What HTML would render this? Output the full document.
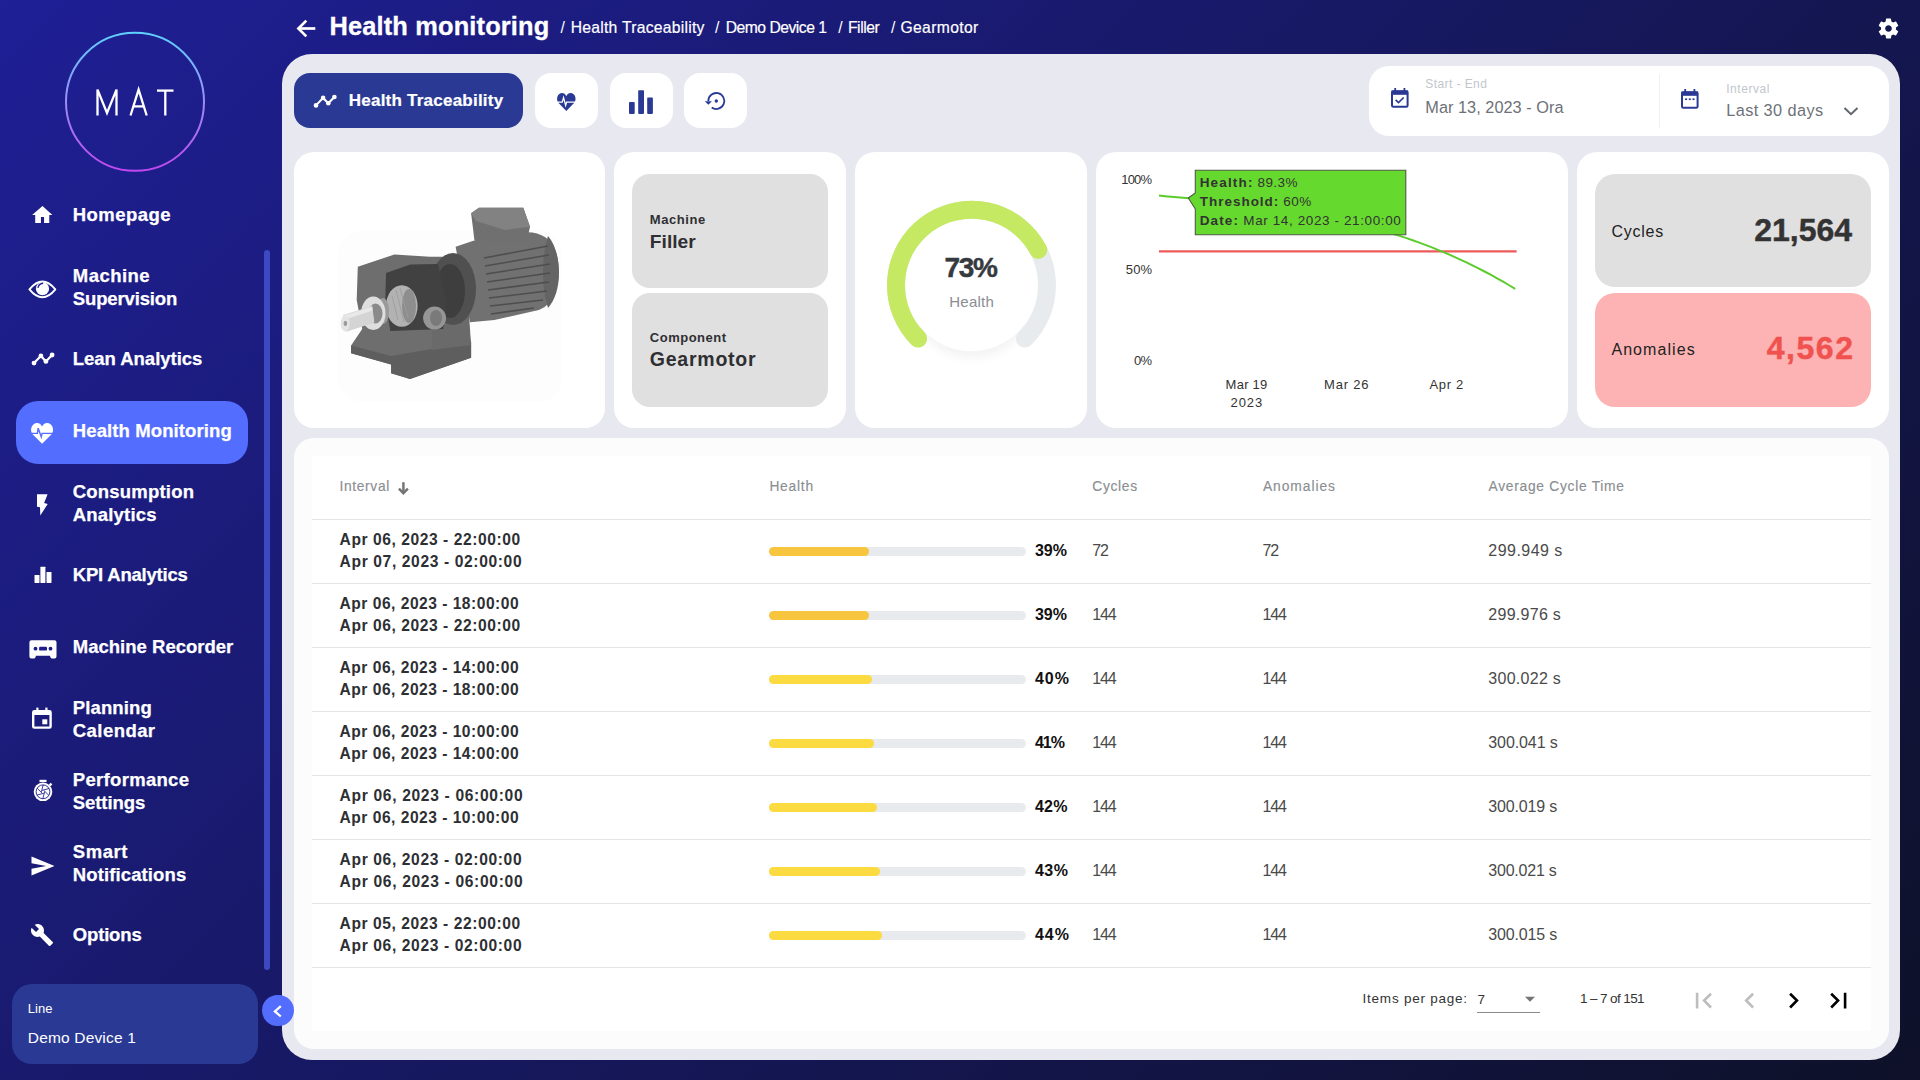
<!DOCTYPE html>
<html><head><meta charset="utf-8"><title>Health monitoring</title>
<style>
html,body{margin:0;padding:0;}
body{width:1920px;height:1080px;overflow:hidden;position:relative;font-family:"Liberation Sans", sans-serif;
background:linear-gradient(135deg,#1f1f96 0%,#0e1128 100%);}
div,svg{box-sizing:border-box;}
</style></head><body>
<div style="position:absolute;left:282px;top:54px;width:1618px;height:1006px;background:#e8e8f0;border-radius:30px;"></div>
<svg style="position:absolute;left:60px;top:26px;" width="150" height="150" viewBox="0 0 150 150">
<defs><linearGradient id="lg" x1="0" y1="0" x2="0" y2="1">
<stop offset="0" stop-color="#5fd0ff"/><stop offset="0.5" stop-color="#9a8cf5"/><stop offset="1" stop-color="#c247f0"/></linearGradient></defs>
<circle cx="75" cy="75.8" r="69" fill="none" stroke="url(#lg)" stroke-width="2"/>
<g fill="none" stroke="#fff" stroke-width="2.3" stroke-linejoin="miter">
<polyline points="37.5,89.5 37.5,63.6 47,87 56.5,63.6 56.5,89.5"/>
<polyline points="70.5,89.5 78.6,63.6 86.7,89.5"/>
<line x1="73.2" y1="80.4" x2="84" y2="80.4"/>
<line x1="97" y1="64.6" x2="113.5" y2="64.6"/>
<line x1="105.3" y1="64.6" x2="105.3" y2="89.5"/>
</g></svg>
<div style="position:absolute;left:16px;top:401px;width:232px;height:63px;background:#536dfe;border-radius:22px;"></div>
<svg style="position:absolute;left:30.2px;top:203.1px;" width="25" height="24" viewBox="0 0 24 24" preserveAspectRatio="none"><path fill="#fff" d="M10.5 20v-6h3v6h5v-8h3L12 3 2 12h3v8z"/></svg>
<div style="position:absolute;left:72.80px;top:206.44px;font-size:18.5px;line-height:18.5px;color:#ffffff;font-weight:700;white-space:pre;letter-spacing:0.457px;-webkit-text-stroke:0.25px #ffffff;">Homepage</div>
<svg style="position:absolute;left:28.1px;top:275.1px;" width="28.8" height="28.8" viewBox="0 0 24 24"><path d="M1.2 12 Q12 -1.2 22.8 12 Q12 25.2 1.2 12 Z" fill="none" stroke="#fff" stroke-width="1.6" stroke-linejoin="round"/><circle cx="12.08" cy="11.4" r="5.5" fill="#fff"/><path d="M8.4 10.3 Q9 7.6 12.2 6.9" fill="none" stroke="#1e1e8c" stroke-width="1.15" stroke-linecap="round"/></svg>
<div style="position:absolute;left:72.80px;top:267.24px;font-size:18.5px;line-height:18.5px;color:#ffffff;font-weight:700;white-space:pre;letter-spacing:0.450px;-webkit-text-stroke:0.25px #ffffff;">Machine</div>
<div style="position:absolute;left:72.80px;top:289.54px;font-size:18.5px;line-height:18.5px;color:#ffffff;font-weight:700;white-space:pre;letter-spacing:-0.140px;-webkit-text-stroke:0.25px #ffffff;">Supervision</div>
<svg style="position:absolute;left:29.5px;top:350.8px;" width="30" height="18" viewBox="0 0 30 18"><polyline points="4.00,12.10 10.90,4.90 15.90,10.40 22.10,4.00" fill="none" stroke="#fff" stroke-width="2.2" stroke-linejoin="round"/><circle cx="4.00" cy="12.10" r="2.4" fill="#fff"/><circle cx="10.90" cy="4.90" r="2.4" fill="#fff"/><circle cx="15.90" cy="10.40" r="2.4" fill="#fff"/><circle cx="22.10" cy="4.00" r="2.4" fill="#fff"/></svg>
<div style="position:absolute;left:72.80px;top:350.44px;font-size:18.5px;line-height:18.5px;color:#ffffff;font-weight:700;white-space:pre;letter-spacing:-0.031px;-webkit-text-stroke:0.25px #ffffff;">Lean Analytics</div>
<svg style="position:absolute;left:31.2px;top:423.1px;overflow:visible" width="24" height="22" viewBox="0 0 24 22"><path fill="#fff" d="M11.1 20.8 L1.6 11.2 C-0.6 8.8 -0.4 3.8 2.4 1.5 C5.2 -0.8 9.3 -0.3 11.1 3.6 C12.9 -0.3 17 -0.8 19.8 1.5 C22.6 3.8 22.8 8.8 20.6 11.2 Z"/><polyline points="-1,10.4 6.4,10.4 7.2,5.2 10.3,14 11.1,10.4 24,10.4" fill="none" stroke="#536dfe" stroke-width="1.4"/></svg>
<div style="position:absolute;left:72.80px;top:422.44px;font-size:18.5px;line-height:18.5px;color:#ffffff;font-weight:700;white-space:pre;letter-spacing:0.106px;-webkit-text-stroke:0.25px #ffffff;">Health Monitoring</div>
<svg style="position:absolute;left:35px;top:493.7px;" width="14" height="22" viewBox="0 0 14 22"><path fill="#fff" d="M2 0.3 L12.6 0.3 L9.1 8.9 L12.7 10.1 L5.3 21.4 L5 13.2 L2 12.7 Z"/></svg>
<div style="position:absolute;left:72.80px;top:483.24px;font-size:18.5px;line-height:18.5px;color:#ffffff;font-weight:700;white-space:pre;letter-spacing:0.200px;-webkit-text-stroke:0.25px #ffffff;">Consumption</div>
<div style="position:absolute;left:72.80px;top:505.54px;font-size:18.5px;line-height:18.5px;color:#ffffff;font-weight:700;white-space:pre;letter-spacing:0.175px;-webkit-text-stroke:0.25px #ffffff;">Analytics</div>
<svg style="position:absolute;left:33.5px;top:566.1px;" width="18" height="17" viewBox="0 0 18 17"><rect x="0.5" y="8.9" width="5" height="8.1" rx="0.4" fill="#fff"/><rect x="6.4" y="0.8" width="5" height="16.2" rx="0.4" fill="#fff"/><rect x="12.5" y="5.9" width="5" height="11.1" rx="0.4" fill="#fff"/></svg>
<div style="position:absolute;left:72.80px;top:566.44px;font-size:18.5px;line-height:18.5px;color:#ffffff;font-weight:700;white-space:pre;letter-spacing:-0.208px;-webkit-text-stroke:0.25px #ffffff;">KPI Analytics</div>
<svg style="position:absolute;left:28.5px;top:639.5px;" width="28" height="19" viewBox="0 0 28 19"><path fill="#fff" d="M2.4 0.2 H25.5 Q27.5 0.2 27.5 2.2 V16.6 Q27.5 18.6 25.5 18.6 H23.3 Q21.8 18.6 21.3 17 L21 15.8 H6.9 L6.6 17 Q6.1 18.6 4.6 18.6 H2.4 Q0.4 18.6 0.4 16.6 V2.2 Q0.4 0.2 2.4 0.2 Z"/><circle cx="6.5" cy="8.7" r="1.9" fill="#1e1e8c"/><circle cx="21.5" cy="8.7" r="1.9" fill="#1e1e8c"/><rect x="10.1" y="6.8" width="7.9" height="3.8" rx="1.2" fill="#1e1e8c"/></svg>
<div style="position:absolute;left:72.80px;top:638.44px;font-size:18.5px;line-height:18.5px;color:#ffffff;font-weight:700;white-space:pre;letter-spacing:0.007px;-webkit-text-stroke:0.25px #ffffff;">Machine Recorder</div>
<svg style="position:absolute;left:32.4px;top:707px;" width="20" height="22" viewBox="0 0 20 22"><rect x="1.2" y="4.2" width="17.4" height="16.4" rx="1.2" fill="none" stroke="#fff" stroke-width="2.4"/><rect x="1" y="4" width="18" height="4" fill="#fff"/><rect x="4.3" y="0.6" width="2.2" height="4" fill="#fff"/><rect x="13.3" y="0.6" width="2.2" height="4" fill="#fff"/><rect x="10.3" y="12.3" width="5" height="5" fill="#fff"/></svg>
<div style="position:absolute;left:72.80px;top:699.24px;font-size:18.5px;line-height:18.5px;color:#ffffff;font-weight:700;white-space:pre;letter-spacing:0.114px;-webkit-text-stroke:0.25px #ffffff;">Planning</div>
<div style="position:absolute;left:72.80px;top:721.54px;font-size:18.5px;line-height:18.5px;color:#ffffff;font-weight:700;white-space:pre;letter-spacing:0.443px;-webkit-text-stroke:0.25px #ffffff;">Calendar</div>
<svg style="position:absolute;left:31.5px;top:778px;" width="22" height="24" viewBox="0 0 22 24"><rect x="7.5" y="1.8" width="7" height="2.3" fill="#fff"/><rect x="17.4" y="5.2" width="2.4" height="2.6" fill="#fff" transform="rotate(45 18.6 6.5)"/><circle cx="11" cy="13.8" r="9.3" fill="#fff"/><circle cx="11" cy="13.8" r="6.9" fill="none" stroke="#1e1e8c" stroke-width="0.9"/><g stroke="#1e1e8c" stroke-width="0.85"><line x1="12.67" y1="13.73" x2="10.81" y2="20.70"/><line x1="11.90" y1="15.22" x2="4.93" y2="17.08"/><line x1="10.22" y1="15.28" x2="5.12" y2="10.19"/><line x1="9.33" y1="13.87" x2="11.19" y2="6.90"/><line x1="10.10" y1="12.38" x2="17.07" y2="10.52"/><line x1="11.78" y1="12.32" x2="16.88" y2="17.41"/></g></svg>
<div style="position:absolute;left:72.80px;top:771.24px;font-size:18.5px;line-height:18.5px;color:#ffffff;font-weight:700;white-space:pre;letter-spacing:0.310px;-webkit-text-stroke:0.25px #ffffff;">Performance</div>
<div style="position:absolute;left:72.80px;top:793.54px;font-size:18.5px;line-height:18.5px;color:#ffffff;font-weight:700;white-space:pre;letter-spacing:-0.071px;-webkit-text-stroke:0.25px #ffffff;">Settings</div>
<svg style="position:absolute;left:31.299999999999997px;top:855.5999999999999px;" width="24" height="20" viewBox="0 0 24 20"><path fill="#fff" d="M0.5 0.5 L23.5 10 L0.5 19.5 L0.5 12.7 L15.2 10 L0.5 7.3 Z"/></svg>
<div style="position:absolute;left:72.80px;top:843.24px;font-size:18.5px;line-height:18.5px;color:#ffffff;font-weight:700;white-space:pre;letter-spacing:0.525px;-webkit-text-stroke:0.25px #ffffff;">Smart</div>
<div style="position:absolute;left:72.80px;top:865.54px;font-size:18.5px;line-height:18.5px;color:#ffffff;font-weight:700;white-space:pre;letter-spacing:0.117px;-webkit-text-stroke:0.25px #ffffff;">Notifications</div>
<svg style="position:absolute;left:30.2px;top:923px;" width="24" height="24" viewBox="0 0 24 24"><path fill="#fff" d="M22.7 19l-9.1-9.1c.9-2.3.4-5-1.5-6.9-2-2-5-2.4-7.4-1.3L9 6 6 9 1.6 4.7C.4 7.1.9 10.1 2.9 12.1c1.9 1.9 4.6 2.4 6.9 1.5l9.1 9.1c.4.4 1 .4 1.4 0l2.3-2.3c.5-.4.5-1.1.1-1.4z"/></svg>
<div style="position:absolute;left:72.80px;top:926.44px;font-size:18.5px;line-height:18.5px;color:#ffffff;font-weight:700;white-space:pre;letter-spacing:-0.167px;-webkit-text-stroke:0.25px #ffffff;">Options</div>
<div style="position:absolute;left:264px;top:250px;width:6px;height:720px;background:#3d49c0;border-radius:3px;"></div>
<div style="position:absolute;left:12px;top:984px;width:246px;height:80px;background:#2a3a94;border-radius:20px;"></div>
<div style="position:absolute;left:27.80px;top:1002.00px;font-size:13px;line-height:13px;color:#ffffff;font-weight:400;white-space:pre;">Line</div>
<div style="position:absolute;left:27.80px;top:1030.48px;font-size:15.5px;line-height:15.5px;color:#ffffff;font-weight:400;white-space:pre;letter-spacing:0.167px;">Demo Device 1</div>
<div style="position:absolute;left:262.3px;top:994.8px;width:31.5px;height:31.5px;background:#536dfe;border-radius:16px;"></div>
<svg style="position:absolute;left:270px;top:1002.5px;" width="16" height="16" viewBox="0 0 16 16"><polyline points="10.8,3.2 4.9,8.4 10.8,13.5" fill="none" stroke="#fff" stroke-width="2.3"/></svg>
<svg style="position:absolute;left:290px;top:14px;" width="30" height="30" viewBox="0 0 30 30"><polyline points="16.3,6.6 8.4,14.5 16.3,22.4" fill="none" stroke="#fff" stroke-width="2.7"/><line x1="8.6" y1="14.5" x2="25.3" y2="14.5" stroke="#fff" stroke-width="2.7"/></svg>
<div style="position:absolute;left:329.50px;top:13.80px;font-size:25.4px;line-height:25.4px;color:#ffffff;font-weight:700;white-space:pre;letter-spacing:0.156px;-webkit-text-stroke:0.3px #ffffff;">Health monitoring</div>
<div style="position:absolute;left:560.60px;top:19.81px;font-size:15.7px;line-height:15.7px;color:#ffffff;font-weight:400;white-space:pre;">/</div>
<div style="position:absolute;left:570.70px;top:19.81px;font-size:15.7px;line-height:15.7px;color:#ffffff;font-weight:400;white-space:pre;letter-spacing:0.261px;-webkit-text-stroke:0.2px #ffffff;">Health Traceability</div>
<div style="position:absolute;left:715.00px;top:19.81px;font-size:15.7px;line-height:15.7px;color:#ffffff;font-weight:400;white-space:pre;">/</div>
<div style="position:absolute;left:725.70px;top:19.81px;font-size:15.7px;line-height:15.7px;color:#ffffff;font-weight:400;white-space:pre;letter-spacing:-0.492px;-webkit-text-stroke:0.2px #ffffff;">Demo Device 1</div>
<div style="position:absolute;left:838.30px;top:19.81px;font-size:15.7px;line-height:15.7px;color:#ffffff;font-weight:400;white-space:pre;">/</div>
<div style="position:absolute;left:848.00px;top:19.81px;font-size:15.7px;line-height:15.7px;color:#ffffff;font-weight:400;white-space:pre;letter-spacing:-0.460px;-webkit-text-stroke:0.2px #ffffff;">Filler</div>
<div style="position:absolute;left:891.00px;top:19.81px;font-size:15.7px;line-height:15.7px;color:#ffffff;font-weight:400;white-space:pre;">/</div>
<div style="position:absolute;left:900.40px;top:19.81px;font-size:15.7px;line-height:15.7px;color:#ffffff;font-weight:400;white-space:pre;letter-spacing:0.363px;-webkit-text-stroke:0.2px #ffffff;">Gearmotor</div>
<svg style="position:absolute;left:1876px;top:16px;" width="25" height="25" viewBox="0 0 24 24"><path fill="#fff" fill-rule="evenodd" d="M19.14 12.94c.04-.3.06-.61.06-.94 0-.32-.02-.64-.07-.94l2.03-1.58c.18-.14.23-.41.12-.61l-1.92-3.32c-.12-.22-.37-.29-.59-.22l-2.39.96c-.5-.38-1.03-.7-1.62-.94l-.36-2.54c-.04-.24-.24-.41-.48-.41h-3.84c-.24 0-.43.17-.47.41l-.36 2.54c-.59.24-1.13.57-1.62.94l-2.39-.96c-.22-.08-.47 0-.59.22L2.74 8.87c-.12.21-.08.47.12.61l2.03 1.58c-.05.3-.09.63-.09.94s.02.64.07.94l-2.03 1.58c-.18.14-.23.41-.12.61l1.92 3.32c.12.22.37.29.59.22l2.39-.96c.5.38 1.03.7 1.62.94l.36 2.54c.05.24.24.41.48.41h3.84c.24 0 .44-.17.47-.41l.36-2.54c.59-.24 1.13-.56 1.62-.94l2.39.96c.22.08.47 0 .59-.22l1.92-3.32c.12-.22.07-.47-.12-.61l-2.01-1.58zM12 15.2c-1.77 0-3.2-1.43-3.2-3.2s1.43-3.2 3.2-3.2 3.2 1.43 3.2 3.2-1.43 3.2-3.2 3.2z"/></svg>
<div style="position:absolute;left:294px;top:73px;width:229px;height:55px;background:#2a3a94;border-radius:16px;"></div>
<svg style="position:absolute;left:312.3px;top:92.8px;" width="30" height="18" viewBox="0 0 30 18"><polyline points="4.00,12.40 11.10,4.90 16.30,10.30 22.40,4.00" fill="none" stroke="#fff" stroke-width="2.1" stroke-linejoin="round"/><circle cx="4.00" cy="12.40" r="2.3" fill="#fff"/><circle cx="11.10" cy="4.90" r="2.3" fill="#fff"/><circle cx="16.30" cy="10.30" r="2.3" fill="#fff"/><circle cx="22.40" cy="4.00" r="2.3" fill="#fff"/></svg>
<div style="position:absolute;left:348.80px;top:91.81px;font-size:17px;line-height:17px;color:#ffffff;font-weight:700;white-space:pre;letter-spacing:0.228px;-webkit-text-stroke:0.2px #ffffff;">Health Traceability</div>
<div style="position:absolute;left:535px;top:73px;width:63px;height:55px;background:#ffffff;border-radius:16px;"></div>
<div style="position:absolute;left:610px;top:73px;width:63px;height:55px;background:#ffffff;border-radius:16px;"></div>
<div style="position:absolute;left:684px;top:73px;width:63px;height:55px;background:#ffffff;border-radius:16px;"></div>
<svg style="position:absolute;left:557.1px;top:92.8px;overflow:visible" width="19" height="18.2" viewBox="0 0 19 18.2"><g transform="scale(0.84,0.87)"><path fill="#2a3a94" d="M11.1 20.8 L1.6 11.2 C-0.6 8.8 -0.4 3.8 2.4 1.5 C5.2 -0.8 9.3 -0.3 11.1 3.6 C12.9 -0.3 17 -0.8 19.8 1.5 C22.6 3.8 22.8 8.8 20.6 11.2 Z"/><polyline points="-1,10.6 6.2,10.6 7.8,5.2 10.3,14.3 11.4,10.6 24,10.6" fill="none" stroke="#fff" stroke-width="1.5"/></g></svg>
<svg style="position:absolute;left:626px;top:88px;" width="30" height="28" viewBox="0 0 30 28"><rect x="3" y="14.1" width="5.7" height="11.8" rx="0.8" fill="#2a3a94"/><rect x="12.2" y="2.2" width="5.8" height="23.7" rx="0.8" fill="#2a3a94"/><rect x="21.2" y="9.6" width="5.7" height="16.3" rx="0.8" fill="#2a3a94"/></svg>
<svg style="position:absolute;left:698px;top:86px;" width="36" height="30" viewBox="0 0 36 30"><path d="M10.3 15 A8 8 0 1 1 13.7 21.55" fill="none" stroke="#2a3a94" stroke-width="1.8"/><path d="M6.8 15.2 L13.9 15.2 L10.4 18.8 Z" fill="#2a3a94"/><circle cx="18.3" cy="15" r="1.7" fill="#2a3a94"/></svg>
<div style="position:absolute;left:1369px;top:66px;width:520px;height:70px;background:#ffffff;border-radius:20px;"></div>
<div style="position:absolute;left:1658.5px;top:74px;width:1.2px;height:54px;background:#eef0f3;border-radius:0px;"></div>
<svg style="position:absolute;left:1389px;top:85px;" width="22" height="24" viewBox="0 0 22 24"><rect x="3" y="6.2" width="15.6" height="15.6" rx="1.3" fill="none" stroke="#2a3a94" stroke-width="2"/><rect x="2.5" y="5.5" width="16.6" height="4.3" fill="#2a3a94"/><rect x="5.3" y="3" width="1.8" height="3" fill="#2a3a94"/><rect x="14.5" y="3" width="1.8" height="3" fill="#2a3a94"/><polyline points="6.6,14.9 9.5,17.6 14.7,12.5" fill="none" stroke="#2a3a94" stroke-width="1.7"/></svg>
<svg style="position:absolute;left:1678.5px;top:86px;" width="22" height="24" viewBox="0 0 22 24"><rect x="3" y="6.2" width="15.6" height="15.6" rx="1.3" fill="none" stroke="#2a3a94" stroke-width="2"/><rect x="2.5" y="5.5" width="16.6" height="4.3" fill="#2a3a94"/><rect x="5.3" y="3" width="1.8" height="3" fill="#2a3a94"/><rect x="14.5" y="3" width="1.8" height="3" fill="#2a3a94"/><rect x="6.1" y="12.4" width="2" height="1.7" fill="#2a3a94"/><rect x="9.8" y="12.4" width="2" height="1.7" fill="#2a3a94"/><rect x="13.5" y="12.4" width="2" height="1.7" fill="#2a3a94"/></svg>
<div style="position:absolute;left:1425.30px;top:77.64px;font-size:12px;line-height:12px;color:#c2c6cc;font-weight:400;white-space:pre;letter-spacing:0.420px;">Start - End</div>
<div style="position:absolute;left:1425.30px;top:99.30px;font-size:16.3px;line-height:16.3px;color:#6d7178;font-weight:400;white-space:pre;letter-spacing:0.035px;">Mar 13, 2023 - Ora</div>
<div style="position:absolute;left:1726.20px;top:82.84px;font-size:12px;line-height:12px;color:#c2c6cc;font-weight:400;white-space:pre;letter-spacing:0.543px;">Interval</div>
<div style="position:absolute;left:1726.20px;top:102.40px;font-size:16.3px;line-height:16.3px;color:#6d7178;font-weight:400;white-space:pre;letter-spacing:0.418px;">Last 30 days</div>
<svg style="position:absolute;left:1840px;top:102px;" width="22" height="18" viewBox="0 0 22 18"><polyline points="4.5,6 11,12.2 17.5,6" fill="none" stroke="#62666d" stroke-width="2"/></svg>
<div style="position:absolute;left:294px;top:152px;width:311px;height:276px;background:#ffffff;border-radius:20px;"></div>
<div style="position:absolute;left:614px;top:152px;width:232px;height:276px;background:#ffffff;border-radius:20px;"></div>
<div style="position:absolute;left:855px;top:152px;width:232px;height:276px;background:#ffffff;border-radius:20px;"></div>
<div style="position:absolute;left:1096px;top:152px;width:472px;height:276px;background:#ffffff;border-radius:20px;"></div>
<div style="position:absolute;left:1577px;top:152px;width:312px;height:276px;background:#ffffff;border-radius:20px;"></div>
<div style="position:absolute;left:632px;top:174px;width:196px;height:114px;background:#e0e0e0;border-radius:18px;"></div>
<div style="position:absolute;left:632px;top:293px;width:196px;height:114px;background:#e0e0e0;border-radius:18px;"></div>
<div style="position:absolute;left:649.80px;top:212.90px;font-size:13px;line-height:13px;color:#2f2f33;font-weight:700;white-space:pre;letter-spacing:0.583px;">Machine</div>
<div style="position:absolute;left:649.80px;top:231.75px;font-size:19.2px;line-height:19.2px;color:#2f2f33;font-weight:700;white-space:pre;letter-spacing:0.020px;">Filler</div>
<div style="position:absolute;left:649.80px;top:330.90px;font-size:13px;line-height:13px;color:#2f2f33;font-weight:700;white-space:pre;letter-spacing:0.500px;">Component</div>
<div style="position:absolute;left:649.80px;top:350.19px;font-size:19.5px;line-height:19.5px;color:#2f2f33;font-weight:700;white-space:pre;letter-spacing:0.762px;">Gearmotor</div>
<svg style="position:absolute;left:855px;top:152px;" width="232" height="276" viewBox="0 0 232 276"><defs><filter id="gsh" x="-30%" y="-30%" width="160%" height="160%"><feGaussianBlur stdDeviation="6"/></filter></defs><circle cx="116.5" cy="143.2" r="62" fill="#000" opacity="0.05" filter="url(#gsh)"/><circle cx="116.5" cy="133.2" r="66" fill="#fff"/><path d="M63.11 186.59 A75.5 75.5 0 1 1 169.89 186.59" fill="none" stroke="#e8ebed" stroke-width="18" stroke-linecap="round"/><path d="M63.11 186.59 A75.5 75.5 0 1 1 183.22 97.87" fill="none" stroke="#c5e963" stroke-width="18" stroke-linecap="round"/></svg>
<div style="position:absolute;left:944.60px;top:253.90px;font-size:28px;line-height:28px;color:#363a3f;font-weight:700;white-space:pre;letter-spacing:-1.400px;-webkit-text-stroke:0.45px #363a3f;">73%</div>
<div style="position:absolute;left:949.30px;top:293.80px;font-size:15px;line-height:15px;color:#8a8e93;font-weight:400;white-space:pre;letter-spacing:0.240px;">Health</div>
<div style="position:absolute;left:1121.30px;top:173.20px;font-size:13px;line-height:13px;color:#333333;font-weight:400;white-space:pre;letter-spacing:-0.833px;">100%</div>
<div style="position:absolute;left:1125.80px;top:263.00px;font-size:13px;line-height:13px;color:#333333;font-weight:400;white-space:pre;letter-spacing:0.100px;">50%</div>
<div style="position:absolute;left:1133.90px;top:353.70px;font-size:13px;line-height:13px;color:#333333;font-weight:400;white-space:pre;letter-spacing:-0.700px;">0%</div>
<div style="position:absolute;left:1225.60px;top:377.80px;font-size:13px;line-height:13px;color:#333333;font-weight:400;white-space:pre;letter-spacing:0.240px;">Mar 19</div>
<div style="position:absolute;left:1230.60px;top:395.90px;font-size:13px;line-height:13px;color:#333333;font-weight:400;white-space:pre;letter-spacing:0.900px;">2023</div>
<div style="position:absolute;left:1324.10px;top:377.80px;font-size:13px;line-height:13px;color:#333333;font-weight:400;white-space:pre;letter-spacing:0.800px;">Mar 26</div>
<div style="position:absolute;left:1429.50px;top:377.80px;font-size:13px;line-height:13px;color:#333333;font-weight:400;white-space:pre;letter-spacing:0.650px;">Apr 2</div>
<svg style="position:absolute;left:1096px;top:152px;" width="472" height="276" viewBox="0 0 472 276"><line x1="63" y1="99.3" x2="420.6" y2="99.3" stroke="#ee5a5a" stroke-width="2.2"/><polyline points="63.00,43.59 69.04,44.13 75.07,44.68 81.11,45.24 87.15,45.79 93.19,46.35 99.22,46.92 105.26,47.50 111.30,48.09 117.34,48.69 123.37,49.31 129.41,49.95 135.45,50.60 141.48,51.28 147.52,51.97 153.56,52.69 159.60,53.44 165.63,54.22 171.67,55.02 177.71,55.86 183.75,56.73 189.78,57.64 195.82,58.58 201.86,59.57 207.89,60.59 213.93,61.66 219.97,62.77 226.01,63.93 232.04,65.14 238.08,66.40 244.12,67.71 250.16,69.08 256.19,70.50 262.23,71.98 268.27,73.52 274.31,75.12 280.34,76.78 286.38,78.51 292.42,80.31 298.45,82.18 304.49,84.11 310.53,86.13 316.57,88.21 322.60,90.37 328.64,92.61 334.68,94.93 340.72,97.34 346.75,99.82 352.79,102.40 358.83,105.06 364.86,107.81 370.90,110.65 376.94,113.58 382.98,116.61 389.01,119.74 395.05,122.97 401.09,126.30 407.13,129.73 413.16,133.26 419.20,136.90" fill="none" stroke="#5ccb2c" stroke-width="2" stroke-linejoin="round"/></svg>
<svg style="position:absolute;left:1185px;top:168px;" width="224" height="70" viewBox="0 0 224 70"><path d="M10.3 2.3 H220.8 V66.7 H10.3 V41 L3.3 30 L10.3 25 Z" fill="#66d92e" stroke="#4d5b45" stroke-width="1.1"/></svg>
<div style="position:absolute;left:1199.70px;top:176.07px;font-size:13.5px;line-height:13.5px;color:#333;font-weight:700;white-space:pre;letter-spacing:1.167px;">Health:</div>
<div style="position:absolute;left:1257.50px;top:176.07px;font-size:13.5px;line-height:13.5px;color:#333;font-weight:400;white-space:pre;letter-spacing:0.425px;">89.3%</div>
<div style="position:absolute;left:1199.70px;top:194.87px;font-size:13.5px;line-height:13.5px;color:#333;font-weight:700;white-space:pre;letter-spacing:0.989px;">Threshold:</div>
<div style="position:absolute;left:1283.30px;top:194.87px;font-size:13.5px;line-height:13.5px;color:#333;font-weight:400;white-space:pre;letter-spacing:0.500px;">60%</div>
<div style="position:absolute;left:1199.70px;top:214.07px;font-size:13.5px;line-height:13.5px;color:#333;font-weight:700;white-space:pre;letter-spacing:1.125px;">Date:</div>
<div style="position:absolute;left:1243.30px;top:214.07px;font-size:13.5px;line-height:13.5px;color:#333;font-weight:400;white-space:pre;letter-spacing:0.609px;">Mar 14, 2023 - 21:00:00</div>
<div style="position:absolute;left:1595px;top:174px;width:276px;height:113px;background:#e0e0e0;border-radius:20px;"></div>
<div style="position:absolute;left:1595px;top:293px;width:276px;height:114px;background:#fdb3b3;border-radius:20px;"></div>
<div style="position:absolute;left:1611.40px;top:223.66px;font-size:16px;line-height:16px;color:#222;font-weight:400;white-space:pre;letter-spacing:0.780px;">Cycles</div>
<div style="position:absolute;left:1754.20px;top:214.31px;font-size:32px;line-height:32px;color:#333333;font-weight:700;white-space:pre;letter-spacing:0.020px;-webkit-text-stroke:0.45px #333333;">21,564</div>
<div style="position:absolute;left:1611.40px;top:341.76px;font-size:16px;line-height:16px;color:#222;font-weight:400;white-space:pre;letter-spacing:1.075px;">Anomalies</div>
<div style="position:absolute;left:1766.70px;top:332.31px;font-size:32px;line-height:32px;color:#f0524f;font-weight:700;white-space:pre;letter-spacing:1.550px;-webkit-text-stroke:0.45px #f0524f;">4,562</div>
<div style="position:absolute;left:294px;top:438px;width:1595px;height:611px;background:#fcfcfd;border-radius:20px;"></div>
<div style="position:absolute;left:312px;top:456px;width:1559px;height:575px;background:#ffffff;border-radius:0px;"></div>
<div style="position:absolute;left:339.40px;top:479.92px;font-size:13.8px;line-height:13.8px;color:#8b8e92;font-weight:400;white-space:pre;letter-spacing:0.671px;-webkit-text-stroke:0.15px #8b8e92;">Interval</div>
<svg style="position:absolute;left:394px;top:478px;" width="18" height="20" viewBox="0 0 18 20"><line x1="9.4" y1="4.2" x2="9.4" y2="14.5" stroke="#757575" stroke-width="2.5"/><polyline points="4.9,10.6 9.4,15.2 13.9,10.6" fill="none" stroke="#757575" stroke-width="2.5"/></svg>
<div style="position:absolute;left:769.40px;top:479.92px;font-size:13.8px;line-height:13.8px;color:#8b8e92;font-weight:400;white-space:pre;letter-spacing:0.760px;-webkit-text-stroke:0.15px #8b8e92;">Health</div>
<div style="position:absolute;left:1092.30px;top:479.92px;font-size:13.8px;line-height:13.8px;color:#8b8e92;font-weight:400;white-space:pre;letter-spacing:0.680px;-webkit-text-stroke:0.15px #8b8e92;">Cycles</div>
<div style="position:absolute;left:1262.90px;top:479.92px;font-size:13.8px;line-height:13.8px;color:#8b8e92;font-weight:400;white-space:pre;letter-spacing:0.962px;-webkit-text-stroke:0.15px #8b8e92;">Anomalies</div>
<div style="position:absolute;left:1488.50px;top:479.92px;font-size:13.8px;line-height:13.8px;color:#8b8e92;font-weight:400;white-space:pre;letter-spacing:0.724px;-webkit-text-stroke:0.15px #8b8e92;">Average Cycle Time</div>
<div style="position:absolute;left:312px;top:519px;width:1559px;height:1px;background:#e6e6e6;border-radius:0px;"></div>
<div style="position:absolute;left:339.60px;top:531.59px;font-size:15.6px;line-height:15.6px;color:#2d2f33;font-weight:700;white-space:pre;letter-spacing:0.559px;">Apr 06, 2023 - 22:00:00</div>
<div style="position:absolute;left:339.60px;top:553.69px;font-size:15.6px;line-height:15.6px;color:#2d2f33;font-weight:700;white-space:pre;letter-spacing:0.627px;">Apr 07, 2023 - 02:00:00</div>
<div style="position:absolute;left:769px;top:547px;width:257px;height:9px;background:#e9eaee;border-radius:4.5px;"></div>
<div style="position:absolute;left:769px;top:547px;width:100.2px;height:9px;background:#f8c53e;border-radius:4.5px;"></div>
<div style="position:absolute;left:1034.90px;top:542.86px;font-size:16px;line-height:16px;color:#111111;font-weight:700;white-space:pre;">39%</div>
<div style="position:absolute;left:1092.20px;top:542.86px;font-size:16px;line-height:16px;color:#4a4a4a;font-weight:400;white-space:pre;letter-spacing:-1.100px;">72</div>
<div style="position:absolute;left:1262.50px;top:542.86px;font-size:16px;line-height:16px;color:#4a4a4a;font-weight:400;white-space:pre;letter-spacing:-1.100px;">72</div>
<div style="position:absolute;left:1488.30px;top:542.86px;font-size:16px;line-height:16px;color:#4a4a4a;font-weight:400;white-space:pre;letter-spacing:0.463px;">299.949 s</div>
<div style="position:absolute;left:312px;top:583px;width:1559px;height:1px;background:#e6e6e6;border-radius:0px;"></div>
<div style="position:absolute;left:339.60px;top:595.59px;font-size:15.6px;line-height:15.6px;color:#2d2f33;font-weight:700;white-space:pre;letter-spacing:0.491px;">Apr 06, 2023 - 18:00:00</div>
<div style="position:absolute;left:339.60px;top:617.69px;font-size:15.6px;line-height:15.6px;color:#2d2f33;font-weight:700;white-space:pre;letter-spacing:0.559px;">Apr 06, 2023 - 22:00:00</div>
<div style="position:absolute;left:769px;top:611px;width:257px;height:9px;background:#e9eaee;border-radius:4.5px;"></div>
<div style="position:absolute;left:769px;top:611px;width:100.2px;height:9px;background:#f8c53e;border-radius:4.5px;"></div>
<div style="position:absolute;left:1034.90px;top:606.86px;font-size:16px;line-height:16px;color:#111111;font-weight:700;white-space:pre;">39%</div>
<div style="position:absolute;left:1092.20px;top:606.86px;font-size:16px;line-height:16px;color:#4a4a4a;font-weight:400;white-space:pre;letter-spacing:-1.100px;">144</div>
<div style="position:absolute;left:1262.50px;top:606.86px;font-size:16px;line-height:16px;color:#4a4a4a;font-weight:400;white-space:pre;letter-spacing:-1.100px;">144</div>
<div style="position:absolute;left:1488.30px;top:606.86px;font-size:16px;line-height:16px;color:#4a4a4a;font-weight:400;white-space:pre;letter-spacing:0.275px;">299.976 s</div>
<div style="position:absolute;left:312px;top:647px;width:1559px;height:1px;background:#e6e6e6;border-radius:0px;"></div>
<div style="position:absolute;left:339.60px;top:659.59px;font-size:15.6px;line-height:15.6px;color:#2d2f33;font-weight:700;white-space:pre;letter-spacing:0.491px;">Apr 06, 2023 - 14:00:00</div>
<div style="position:absolute;left:339.60px;top:681.69px;font-size:15.6px;line-height:15.6px;color:#2d2f33;font-weight:700;white-space:pre;letter-spacing:0.491px;">Apr 06, 2023 - 18:00:00</div>
<div style="position:absolute;left:769px;top:675px;width:257px;height:9px;background:#e9eaee;border-radius:4.5px;"></div>
<div style="position:absolute;left:769px;top:675px;width:102.8px;height:9px;background:#fbdb3f;border-radius:4.5px;"></div>
<div style="position:absolute;left:1034.90px;top:670.86px;font-size:16px;line-height:16px;color:#111111;font-weight:700;white-space:pre;letter-spacing:1.000px;">40%</div>
<div style="position:absolute;left:1092.20px;top:670.86px;font-size:16px;line-height:16px;color:#4a4a4a;font-weight:400;white-space:pre;letter-spacing:-1.100px;">144</div>
<div style="position:absolute;left:1262.50px;top:670.86px;font-size:16px;line-height:16px;color:#4a4a4a;font-weight:400;white-space:pre;letter-spacing:-1.100px;">144</div>
<div style="position:absolute;left:1488.30px;top:670.86px;font-size:16px;line-height:16px;color:#4a4a4a;font-weight:400;white-space:pre;letter-spacing:0.275px;">300.022 s</div>
<div style="position:absolute;left:312px;top:711px;width:1559px;height:1px;background:#e6e6e6;border-radius:0px;"></div>
<div style="position:absolute;left:339.60px;top:723.59px;font-size:15.6px;line-height:15.6px;color:#2d2f33;font-weight:700;white-space:pre;letter-spacing:0.491px;">Apr 06, 2023 - 10:00:00</div>
<div style="position:absolute;left:339.60px;top:745.69px;font-size:15.6px;line-height:15.6px;color:#2d2f33;font-weight:700;white-space:pre;letter-spacing:0.491px;">Apr 06, 2023 - 14:00:00</div>
<div style="position:absolute;left:769px;top:739px;width:257px;height:9px;background:#e9eaee;border-radius:4.5px;"></div>
<div style="position:absolute;left:769px;top:739px;width:105.4px;height:9px;background:#fbdb3f;border-radius:4.5px;"></div>
<div style="position:absolute;left:1034.90px;top:734.86px;font-size:16px;line-height:16px;color:#111111;font-weight:700;white-space:pre;letter-spacing:-1.000px;">41%</div>
<div style="position:absolute;left:1092.20px;top:734.86px;font-size:16px;line-height:16px;color:#4a4a4a;font-weight:400;white-space:pre;letter-spacing:-1.100px;">144</div>
<div style="position:absolute;left:1262.50px;top:734.86px;font-size:16px;line-height:16px;color:#4a4a4a;font-weight:400;white-space:pre;letter-spacing:-1.100px;">144</div>
<div style="position:absolute;left:1488.30px;top:734.86px;font-size:16px;line-height:16px;color:#4a4a4a;font-weight:400;white-space:pre;letter-spacing:-0.100px;">300.041 s</div>
<div style="position:absolute;left:312px;top:775px;width:1559px;height:1px;background:#e6e6e6;border-radius:0px;"></div>
<div style="position:absolute;left:339.60px;top:787.59px;font-size:15.6px;line-height:15.6px;color:#2d2f33;font-weight:700;white-space:pre;letter-spacing:0.673px;">Apr 06, 2023 - 06:00:00</div>
<div style="position:absolute;left:339.60px;top:809.69px;font-size:15.6px;line-height:15.6px;color:#2d2f33;font-weight:700;white-space:pre;letter-spacing:0.491px;">Apr 06, 2023 - 10:00:00</div>
<div style="position:absolute;left:769px;top:803px;width:257px;height:9px;background:#e9eaee;border-radius:4.5px;"></div>
<div style="position:absolute;left:769px;top:803px;width:107.9px;height:9px;background:#fbdb3f;border-radius:4.5px;"></div>
<div style="position:absolute;left:1034.90px;top:798.86px;font-size:16px;line-height:16px;color:#111111;font-weight:700;white-space:pre;letter-spacing:0.250px;">42%</div>
<div style="position:absolute;left:1092.20px;top:798.86px;font-size:16px;line-height:16px;color:#4a4a4a;font-weight:400;white-space:pre;letter-spacing:-1.100px;">144</div>
<div style="position:absolute;left:1262.50px;top:798.86px;font-size:16px;line-height:16px;color:#4a4a4a;font-weight:400;white-space:pre;letter-spacing:-1.100px;">144</div>
<div style="position:absolute;left:1488.30px;top:798.86px;font-size:16px;line-height:16px;color:#4a4a4a;font-weight:400;white-space:pre;letter-spacing:-0.162px;">300.019 s</div>
<div style="position:absolute;left:312px;top:839px;width:1559px;height:1px;background:#e6e6e6;border-radius:0px;"></div>
<div style="position:absolute;left:339.60px;top:851.59px;font-size:15.6px;line-height:15.6px;color:#2d2f33;font-weight:700;white-space:pre;letter-spacing:0.627px;">Apr 06, 2023 - 02:00:00</div>
<div style="position:absolute;left:339.60px;top:873.69px;font-size:15.6px;line-height:15.6px;color:#2d2f33;font-weight:700;white-space:pre;letter-spacing:0.673px;">Apr 06, 2023 - 06:00:00</div>
<div style="position:absolute;left:769px;top:867px;width:257px;height:9px;background:#e9eaee;border-radius:4.5px;"></div>
<div style="position:absolute;left:769px;top:867px;width:110.5px;height:9px;background:#fbdb3f;border-radius:4.5px;"></div>
<div style="position:absolute;left:1034.90px;top:862.86px;font-size:16px;line-height:16px;color:#111111;font-weight:700;white-space:pre;letter-spacing:0.500px;">43%</div>
<div style="position:absolute;left:1092.20px;top:862.86px;font-size:16px;line-height:16px;color:#4a4a4a;font-weight:400;white-space:pre;letter-spacing:-1.100px;">144</div>
<div style="position:absolute;left:1262.50px;top:862.86px;font-size:16px;line-height:16px;color:#4a4a4a;font-weight:400;white-space:pre;letter-spacing:-1.100px;">144</div>
<div style="position:absolute;left:1488.30px;top:862.86px;font-size:16px;line-height:16px;color:#4a4a4a;font-weight:400;white-space:pre;letter-spacing:-0.225px;">300.021 s</div>
<div style="position:absolute;left:312px;top:903px;width:1559px;height:1px;background:#e6e6e6;border-radius:0px;"></div>
<div style="position:absolute;left:339.60px;top:915.59px;font-size:15.6px;line-height:15.6px;color:#2d2f33;font-weight:700;white-space:pre;letter-spacing:0.559px;">Apr 05, 2023 - 22:00:00</div>
<div style="position:absolute;left:339.60px;top:937.69px;font-size:15.6px;line-height:15.6px;color:#2d2f33;font-weight:700;white-space:pre;letter-spacing:0.627px;">Apr 06, 2023 - 02:00:00</div>
<div style="position:absolute;left:769px;top:931px;width:257px;height:9px;background:#e9eaee;border-radius:4.5px;"></div>
<div style="position:absolute;left:769px;top:931px;width:113.1px;height:9px;background:#fbdb3f;border-radius:4.5px;"></div>
<div style="position:absolute;left:1034.90px;top:926.86px;font-size:16px;line-height:16px;color:#111111;font-weight:700;white-space:pre;letter-spacing:1.000px;">44%</div>
<div style="position:absolute;left:1092.20px;top:926.86px;font-size:16px;line-height:16px;color:#4a4a4a;font-weight:400;white-space:pre;letter-spacing:-1.100px;">144</div>
<div style="position:absolute;left:1262.50px;top:926.86px;font-size:16px;line-height:16px;color:#4a4a4a;font-weight:400;white-space:pre;letter-spacing:-1.100px;">144</div>
<div style="position:absolute;left:1488.30px;top:926.86px;font-size:16px;line-height:16px;color:#4a4a4a;font-weight:400;white-space:pre;letter-spacing:-0.162px;">300.015 s</div>
<div style="position:absolute;left:312px;top:967px;width:1559px;height:1px;background:#e6e6e6;border-radius:0px;"></div>
<div style="position:absolute;left:1362.60px;top:991.87px;font-size:13.5px;line-height:13.5px;color:#333333;font-weight:400;white-space:pre;letter-spacing:0.757px;">Items per page:</div>
<div style="position:absolute;left:1477.50px;top:992.57px;font-size:13.5px;line-height:13.5px;color:#333333;font-weight:400;white-space:pre;">7</div>
<svg style="position:absolute;left:1522px;top:994px;" width="16" height="10" viewBox="0 0 16 10"><path d="M3 2.8 H13 L8 7.8 Z" fill="#757575"/></svg>
<div style="position:absolute;left:1477px;top:1012px;width:62.5px;height:1px;background:#8a8a8a;border-radius:0px;"></div>
<div style="position:absolute;left:1580.00px;top:991.87px;font-size:13.5px;line-height:13.5px;color:#333333;font-weight:400;white-space:pre;letter-spacing:-0.609px;">1 – 7 of 151</div>
<svg style="position:absolute;left:1688.2px;top:984.9px;" width="31.2" height="31.2" viewBox="0 0 24 24"><path fill="#bdbdbd" d="M18.41 16.59L13.82 12l4.59-4.59L17 6l-6 6 6 6zM6 6h2v12H6z"/></svg>
<svg style="position:absolute;left:1733.5px;top:984.9px;" width="31.2" height="31.2" viewBox="0 0 24 24"><path fill="#bdbdbd" d="M15.41 7.41L14 6l-6 6 6 6 1.41-1.41L10.83 12z"/></svg>
<svg style="position:absolute;left:1778.2px;top:984.9px;" width="31.2" height="31.2" viewBox="0 0 24 24"><path fill="#000000" d="M10 6L8.59 7.41 13.17 12l-4.58 4.59L10 18l6-6z"/></svg>
<svg style="position:absolute;left:1823.2px;top:984.9px;" width="31.2" height="31.2" viewBox="0 0 24 24"><path fill="#000000" d="M5.59 7.41L10.18 12l-4.59 4.59L7 18l6-6-6-6zM16 6h2v12h-2z"/></svg>
<div style="position:absolute;left:338px;top:231px;width:224px;height:171px;background:#fdfdfd;border-radius:24px;"></div>
<svg style="position:absolute;left:330px;top:195px;" width="240" height="200" viewBox="330 195 240 200">
<path d="M455.6 246.7 L475.6 240 L526.7 232.2 C541 232 552 239 556 252 C560 266 560 286 553 298 C548 306 541 310 534.4 311.1 L494.4 320 L470 322.2 Z" fill="#717171"/>
<path d="M548 236 C555 244 559 258 559 272 C559 288 555 300 548 308 C544 296 543 284 543 272 C543 258 545 246 548 236 Z" fill="#646464"/>
<g stroke="#4e4e4e" stroke-width="1.6">
<line x1="484" y1="258" x2="548" y2="246"/><line x1="485" y1="266" x2="549" y2="255"/><line x1="486" y1="274" x2="550" y2="264"/>
<line x1="487" y1="282" x2="550" y2="273"/><line x1="488" y1="290" x2="549" y2="282"/><line x1="489" y1="298" x2="547" y2="291"/>
<line x1="490" y1="306" x2="543" y2="300"/><line x1="491" y1="314" x2="534" y2="308"/></g>
<path d="M474.4 240 L471.1 213.3 L478.9 207.8 L523.3 207.8 L530 226.7 L526.7 242.2 Z" fill="#707070"/>
<path d="M471.1 213.3 L478.9 207.8 L523.3 207.8 L530 226.7 L505 230 L476 221 Z" fill="#828282"/>
<path d="M357.8 266.7 L394.4 254.4 L430 256.7 L443.3 256.7 L443 330 L465.6 322.2 L471.1 342.2 L471.1 357.8 L410 378.9 L391.1 373.3 L391.1 364.4 L351.1 353.3 L351.1 345.6 L362.2 328.9 L356.7 300 Z" fill="#6e6e6e"/>
<path d="M351.1 345.6 L391.1 356 L471.1 342.2 L471.1 357.8 L410 378.9 L391.1 373.3 L391.1 364.4 L351.1 353.3 Z" fill="#5e5e5e"/>
<path d="M432 300 L468 300 L471.1 345 L432 350 Z" fill="#6a6a6a"/>
<ellipse cx="453" cy="289" rx="23" ry="36" fill="#505050"/>
<ellipse cx="450" cy="291" rx="15" ry="27" fill="#3e3e3e"/>
<path d="M386 273 L410.4 264.4 L438 264 L446 300 L443.3 329 L390.3 331 L385.3 300.3 Z" fill="#414141"/>
<ellipse cx="434.6" cy="318.1" rx="11.5" ry="11.5" fill="#969696"/><ellipse cx="436" cy="318" rx="6" ry="8" fill="#7a7a7a"/>
<ellipse cx="401.8" cy="306" rx="15.8" ry="20.8" fill="#b2b2b2"/>
<ellipse cx="409" cy="306" rx="7" ry="17" fill="#8e8e8e"/><g stroke="#9c9c9c" stroke-width="0.8"><line x1="396" y1="290" x2="404" y2="322"/><line x1="392" y1="296" x2="398" y2="320"/><line x1="400" y1="288" x2="408" y2="318"/></g>
<ellipse cx="383" cy="311" rx="6" ry="13" fill="#9a9a9a"/><ellipse cx="373.3" cy="313.3" rx="12.2" ry="16.7" fill="#dedede"/>
<ellipse cx="375.5" cy="313.5" rx="7" ry="10" fill="#8a8a8a"/>
<path d="M343 315 L372.2 306 L374.4 322.5 L346.5 331.8 Z" fill="#d4d4d4"/>
<path d="M343.3 315.6 L372.2 306.7 L372.6 310.5 L344 320 Z" fill="#e8e8e8"/>
<ellipse cx="345.2" cy="323.4" rx="4.5" ry="8" fill="#e4e4e4"/>
<ellipse cx="345.4" cy="323.4" rx="1.8" ry="2.6" fill="#9a9a9a"/>
</svg>
</body></html>
